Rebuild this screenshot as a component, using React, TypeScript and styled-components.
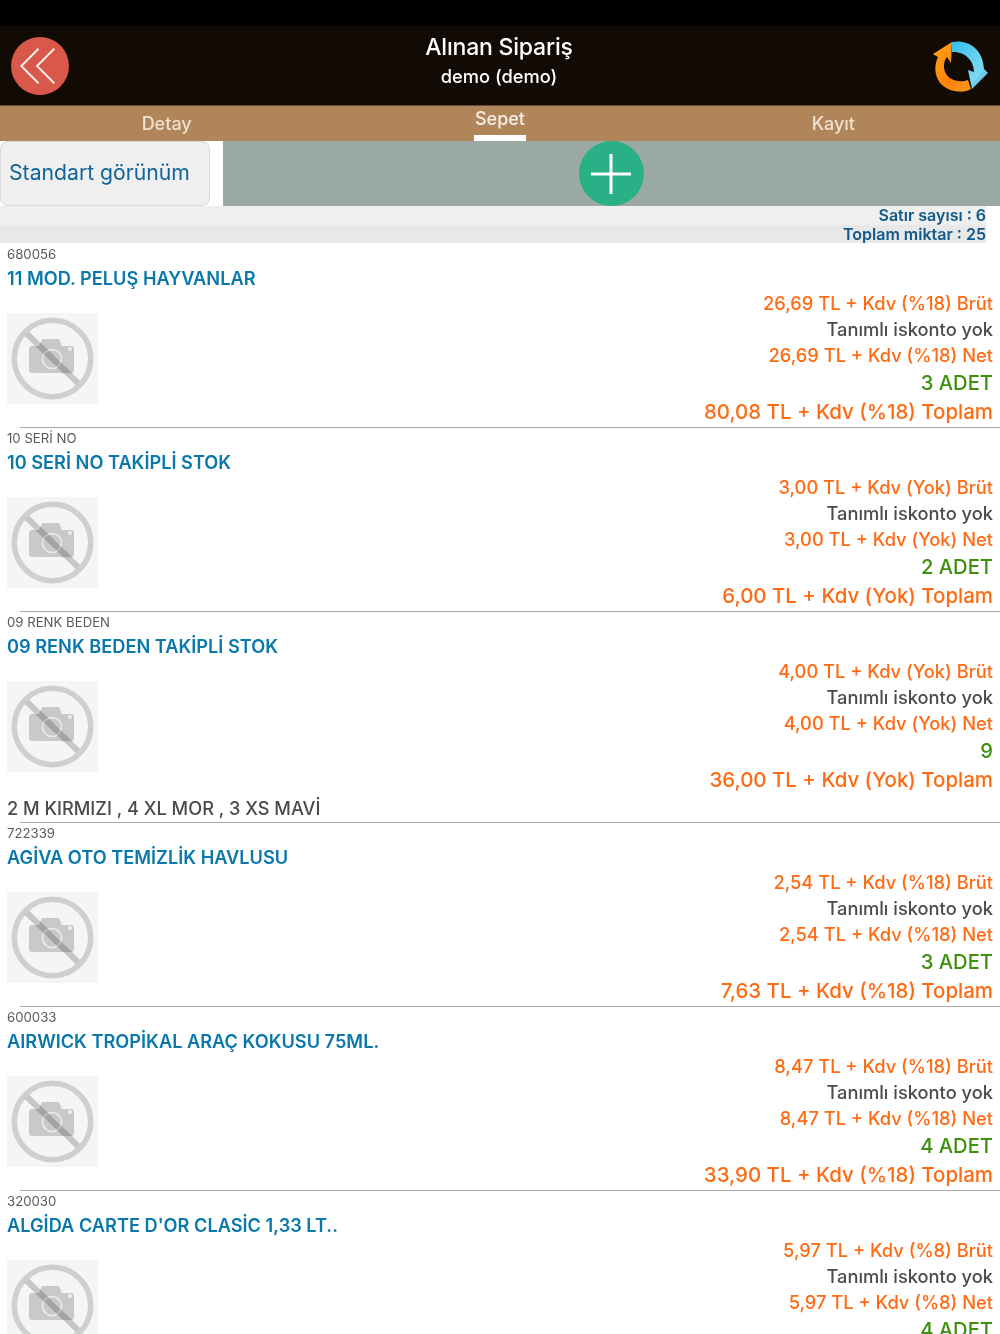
import React from 'react';
import styled, {createGlobalStyle} from 'styled-components';

type OrderItemType = {
    code: string
    title: string
    gross: string
    net: string
    quantity: string
    total: string
    note?: string
}

const items: OrderItemType[] = [
    {code: '680056', title: '11 MOD. PELUŞ HAYVANLAR', gross: '26,69 TL + Kdv (%18) Brüt', net: '26,69 TL + Kdv (%18) Net', quantity: '3 ADET', total: '80,08 TL + Kdv (%18) Toplam'},
    {code: '10 SERİ NO', title: '10 SERİ NO TAKİPLİ STOK', gross: '3,00 TL + Kdv (Yok) Brüt', net: '3,00 TL + Kdv (Yok) Net', quantity: '2 ADET', total: '6,00 TL + Kdv (Yok) Toplam'},
    {code: '09 RENK BEDEN', title: '09 RENK BEDEN TAKİPLİ STOK', gross: '4,00 TL + Kdv (Yok) Brüt', net: '4,00 TL + Kdv (Yok) Net', quantity: '9', total: '36,00 TL + Kdv (Yok) Toplam', note: '2 M KIRMIZI , 4 XL MOR , 3 XS MAVİ'},
    {code: '722339', title: 'AGİVA OTO TEMİZLİK HAVLUSU', gross: '2,54 TL + Kdv (%18) Brüt', net: '2,54 TL + Kdv (%18) Net', quantity: '3 ADET', total: '7,63 TL + Kdv (%18) Toplam'},
    {code: '600033', title: 'AIRWICK TROPİKAL ARAÇ KOKUSU 75ML.', gross: '8,47 TL + Kdv (%18) Brüt', net: '8,47 TL + Kdv (%18) Net', quantity: '4 ADET', total: '33,90 TL + Kdv (%18) Toplam'},
    {code: '320030', title: "ALGİDA CARTE D'OR CLASİC 1,33 LT..", gross: '5,97 TL + Kdv (%8) Brüt', net: '5,97 TL + Kdv (%8) Net', quantity: '4 ADET', total: '23,88 TL + Kdv (%8) Toplam'},
];

const tabs = ['Detay', 'Sepet', 'Kayıt'];

const BackIcon = () => (
    <svg width="58" height="58" viewBox="0 0 59 59">
        <circle cx="29.5" cy="29.5" r="29.5" fill="#d9584a"/>
        <path d="M28 12 L10.5 29.5 L28 47 M44 12 L26.5 29.5 L44 47" fill="none" stroke="#fbeeea" strokeWidth="2"/>
    </svg>
);

const RefreshIcon = () => (
    <svg width="80" height="70" viewBox="0 0 80 70">
        <defs>
            <linearGradient id="blueArc" x1="0" y1="0" x2="1" y2="1">
                <stop offset="0" stopColor="#35bdf0"/>
                <stop offset="0.7" stopColor="#7cd8f2"/>
                <stop offset="1" stopColor="#3d9cc4"/>
            </linearGradient>
            <linearGradient id="orangeArc" x1="0" y1="0" x2="1" y2="1">
                <stop offset="0" stopColor="#ffa51a"/>
                <stop offset="0.6" stopColor="#ff8208"/>
                <stop offset="1" stopColor="#f59a20"/>
            </linearGradient>
        </defs>
        <path d="M32 11 L13 23 L18 26 C11 41 18 59 38 60.5 C43 61 48 60 51 58 L48 49 C40 52 26 50 24 37 C23.5 32 25 28 27 26 L31 32 Z" fill="url(#orangeArc)"/>
        <path d="M32 11 C46 8 63 16 64 38 L68 42 L52 58 L48 39 L54 41 C54 29 44 20 32 21 Z" fill="url(#blueArc)"/>
    </svg>
);

const PlusIcon = () => (
    <svg width="40" height="40" viewBox="0 0 40 40">
        <path d="M20 0 V40 M0 20 H40" stroke="#fff" strokeWidth="3"/>
    </svg>
);

const NoPhotoIcon = () => (
    <svg width="91" height="91" viewBox="0 0 91 91">
        <path d="M22 33 H32 L35 26 H52 L55 33 H64 Q67 33 67 36 V57 Q67 60 64 60 H25 Q22 60 22 57 V36 Q22 33 25 33 Z" fill="#c9c9c9"/>
        <circle cx="45" cy="46" r="9.5" fill="none" stroke="#ececec" strokeWidth="1.6"/>
        <circle cx="63" cy="36" r="2" fill="#efefef"/>
        <SlashLine d="M19 20 L72 71"/>
        <circle cx="45.5" cy="45.5" r="38.2" fill="none" stroke="#cfcfcf" strokeWidth="5.5"/>
    </svg>
);

const App = () => {
    return (
        <Page>
            <GlobalStyle/>
            <StatusBar/>
            <Header>
                <BackButton><BackIcon/></BackButton>
                <HeaderTitle>
                    <Title>Alınan Sipariş</Title>
                    <Subtitle>demo (demo)</Subtitle>
                </HeaderTitle>
                <RefreshButton><RefreshIcon/></RefreshButton>
            </Header>
            <TabBar>
                {tabs.map(tab => <Tab key={tab} active={tab === 'Sepet'}>{tab}</Tab>)}
            </TabBar>
            <Toolbar>
                <ViewButton>Standart görünüm</ViewButton>
                <ToolPanel>
                    <AddButton><PlusIcon/></AddButton>
                </ToolPanel>
            </Toolbar>
            <Summary>
                <SummaryRow shade="#efefef">Satır sayısı : 6</SummaryRow>
                <SummaryRow shade="#e8e8e8">Toplam miktar : 25</SummaryRow>
            </Summary>
            {items.map(item => (
                <Item key={item.code}>
                    <Code>{item.code}</Code>
                    <ItemTitle>{item.title}</ItemTitle>
                    <ItemBody>
                        <Thumb><NoPhotoIcon/></Thumb>
                        <Prices>
                            <PriceLine>{item.gross}</PriceLine>
                            <Discount>Tanımlı iskonto yok</Discount>
                            <PriceLine>{item.net}</PriceLine>
                            <Quantity>{item.quantity}</Quantity>
                            <Total>{item.total}</Total>
                        </Prices>
                    </ItemBody>
                    {item.note && <Note>{item.note}</Note>}
                    <Divider/>
                </Item>
            ))}
        </Page>
    );
};

export default App;

const GlobalStyle = createGlobalStyle`
  html, body {
    margin: 0;
    padding: 0;
    background: #fff;
    font-family: "Inter", "Liberation Sans", sans-serif;
  }
`

const SlashLine = styled.path`
  stroke: #cfcfcf;
  stroke-width: 6px;
  mix-blend-mode: multiply;
`

const Page = styled.div`
  height: 1334px;
  overflow: hidden;
`

const StatusBar = styled.div`
  height: 26px;
  background: #000;
`

const Header = styled.div`
  height: 79px;
  border-bottom: 1px solid #6b4a2a;
  background: #120a04;
  display: flex;
  align-items: center;
  justify-content: space-between;
`

const BackButton = styled.div`
  width: 80px;
  box-sizing: border-box;
  display: flex;
  padding: 1px 0 0 11px;
`

const HeaderTitle = styled.div`
  flex: 1;
  display: flex;
  flex-direction: column;
  align-items: center;
  color: #fff;
  padding: 0 2px 9px 0;
`

const Title = styled.div`
  font-size: 23px;
  line-height: 30px;
  font-weight: 500;
  letter-spacing: -0.2px;
`

const Subtitle = styled.div`
  font-size: 18.3px;
  line-height: 28px;
  font-weight: 500;
`

const RefreshButton = styled.div`
  display: flex;
`

const TabBar = styled.div`
  height: 35px;
  background: #b08559;
  display: grid;
  grid-template-columns: repeat(3, 1fr);
`

const Tab = styled.div<{active: boolean}>`
  width: ${props => props.active ? '52px' : 'auto'};
  justify-self: center;
  box-sizing: border-box;
  height: 35px;
  padding-top: ${props => props.active ? '2px' : '7px'};
  border-bottom: ${props => props.active ? '6px solid #fff' : 'none'};
  font-size: 18px;
  line-height: 22px;
  font-weight: 500;
  text-align: center;
  white-space: nowrap;
  color: ${props => props.active ? '#f6efe7' : '#f0e1d1'};
`

const Toolbar = styled.div`
  height: 65px;
  display: flex;
  background: #fff;
`

const ViewButton = styled.div`
  width: 210px;
  box-sizing: border-box;
  margin-right: 13px;
  padding: 0 0 3px 8px;
  display: flex;
  align-items: center;
  background: #efefef;
  border: 1px solid #d9d9d9;
  border-radius: 8px;
  color: #10649a;
  font-size: 21.2px;
  white-space: nowrap;
`

const ToolPanel = styled.div`
  flex: 1;
  background: #9aaaa3;
  display: flex;
  justify-content: center;
`

const AddButton = styled.div`
  width: 65px;
  height: 65px;
  margin-left: -1px;
  border-radius: 50%;
  background: #29b086;
  display: flex;
  align-items: center;
  justify-content: center;
`

const Summary = styled.div`
  margin-bottom: 1px;
`

const SummaryRow = styled.div<{shade: string}>`
  width: 986px;
  height: 18.5px;
  background: ${props => props.shade};
  color: #10598a;
  font-size: 16px;
  line-height: 19px;
  font-weight: 600;
  text-align: right;
`

const Item = styled.div``

const Code = styled.div`
  padding: 0 7px;
  height: 20px;
  font-size: 13.2px;
  line-height: 20px;
  color: #5a5a5a;
`

const ItemTitle = styled.div`
  padding: 0 7px;
  height: 26px;
  font-size: 18.2px;
  line-height: 28px;
  font-weight: 600;
  color: #0a78aa;
`

const ItemBody = styled.div`
  display: flex;
  justify-content: space-between;
  padding: 0 7px;
  height: 137px;
`

const Thumb = styled.div`
  width: 91px;
  height: 91px;
  margin-top: 23px;
  background: #f5f5f5;
`

const Prices = styled.div`
  display: flex;
  flex-direction: column;
  align-items: flex-end;
`

const PriceLine = styled.div`
  font-size: 18.3px;
  line-height: 26px;
  font-weight: 500;
  color: #ff6a13;
`

const Discount = styled(PriceLine)`
  color: #4a4a4a;
`

const Quantity = styled.div`
  font-size: 20.2px;
  line-height: 29px;
  font-weight: 500;
  color: #3f8f10;
`

const Total = styled.div`
  font-size: 20.45px;
  line-height: 29px;
  font-weight: 500;
  color: #ff6a13;
`

const Note = styled.div`
  padding: 0 7px;
  height: 27px;
  font-size: 18.2px;
  line-height: 26px;
  font-weight: 500;
  color: #4a4a4a;
`

const Divider = styled.div`
  height: 1px;
  margin-left: 20px;
  background: #a9a9a9;
`
